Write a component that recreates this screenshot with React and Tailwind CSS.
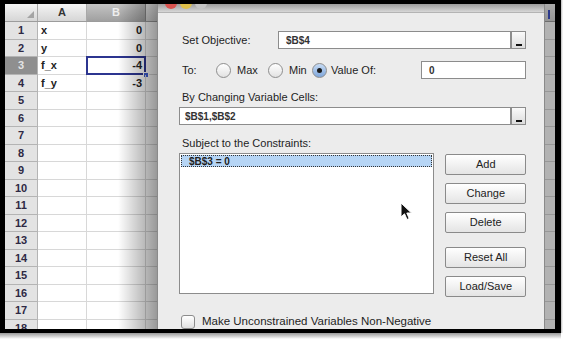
const cells = { 1: ["x", "0"], 2: ["y", "0"], 3: ["f_x", "-4"], 4: ["f_y", "-3"] };
const rowNums = Array.from({ length: 18 }, (_, i) => i + 1);

const Sheet = () => {
  return (
    <div className="flex flex-col w-full h-full bg-white font-['Liberation_Sans',Arial,sans-serif]">
      <div className="flex h-[18px] shrink-0 border-b border-[#9c9c9c] bg-gradient-to-b from-[#f4f4f4] to-[#d6d6d6]">
        <div className="relative w-[33px] border-r border-[#a8a8a8]">
          <div className="absolute right-[3px] bottom-[3px] w-0 h-0 border-l-[7px] border-l-transparent border-b-[7px] border-b-[#a4a4a4]" />
        </div>
        <div className="w-[49px] border-r border-[#a8a8a8] flex items-center justify-center text-[11px] font-bold text-[#333]">A</div>
        <div className="w-[59px] border-r border-[#8a8a8a] flex items-center justify-center text-[11px] font-bold text-[#eeeeee] bg-gradient-to-b from-[#c4c4c4] to-[#a0a0a0]">B</div>
        <div className="flex-1" />
      </div>
      {rowNums.map((n) => {
        const [a, b] = cells[n] || ["", ""];
        const sel = n === 3;
        return (
          <div key={n} className="flex h-[17.5px] shrink-0">
            <div className={`w-[33px] flex items-center justify-center border-r border-b border-[#b4b4b4] text-[11px] font-bold ${sel ? "bg-[#8f8f8f] text-[#e4e4e4]" : "bg-[#e3e3e3] text-[#2e2944]"}`}>
              {n}
            </div>
            <div className="w-[49px] flex items-center pl-[3px] border-r border-b border-[#d8d8d8] text-[11px] font-bold text-[#222]">{a}</div>
            <div className="relative w-[59px] flex items-center justify-end pr-[3px] border-r border-b border-[#d8d8d8] text-[11px] font-bold text-[#222]">
              {b}
              {sel && (
                <>
                  <div className="absolute inset-[-1px] border-2 border-[#2c3590]" />
                  <div className="absolute right-[-4px] bottom-[-4px] w-[6px] h-[6px] bg-[#3d5fd8] border border-white" />
                </>
              )}
            </div>
            <div className="flex-1 border-b border-[#d8d8d8]" />
          </div>
        );
      })}
    </div>
  );
};

const RangeButton = () => (
  <div className="relative w-[15px] h-[18px] border border-[#8c8c8c] bg-gradient-to-b from-[#fafafa] to-[#dcdcdc]">
    <div className="absolute left-[4px] bottom-[2px] w-[6px] h-[2px] bg-[#111]" />
  </div>
);

const Radio = ({ checked }) => (
  <div className={`w-[15px] h-[15px] rounded-full border border-[#8e8e8e] flex items-center justify-center ${checked ? "bg-gradient-to-b from-[#c7dcf5] to-[#7fa6da]" : "bg-gradient-to-b from-white to-[#e2e2e2]"}`}>
    {checked && <div className="w-[5px] h-[5px] rounded-full bg-[#1a1a1a]" />}
  </div>
);

const Btn = ({ label, className }) => (
  <div className={`h-[21px] flex items-center justify-center border border-[#8a8a8a] rounded-[2px] bg-gradient-to-b from-white to-[#e4e4e4] text-[11px] text-[#222] ${className || ""}`}>
    {label}
  </div>
);

const Dialog = () => {
  return (
    <div className="absolute left-[152px] top-0 w-[388px] h-[340px] flex flex-col border-l border-r border-[#8a8a8a] bg-[#ececec] font-['Liberation_Sans',Arial,sans-serif] text-[11px] text-[#1e1e1e]">
      <div className="relative h-[9px] shrink-0 bg-gradient-to-b from-[#9c9c9c] to-[#d8d8d8] border-b border-[#b4b4b4]">
        <div className="absolute left-[7px] top-[-7px] w-[12px] h-[12px] rounded-full bg-[#d9534f]" />
        <div className="absolute left-[22px] top-[-7px] w-[12px] h-[12px] rounded-full bg-[#e0c04a]" />
        <div className="absolute left-[37px] top-[-7px] w-[12px] h-[12px] rounded-full bg-[#c4c4c4]" />
        <div className="absolute inset-x-0 top-[-11px] text-center text-[12px] leading-[14px] text-[#666]">Solver Parameters</div>
      </div>
      <div className="flex flex-col pl-[21px] pr-[18px] pt-[18px]">
        <div className="flex items-center h-[18px]">
          <div className="w-[99px] pl-[3px]">Set Objective:</div>
          <div className="flex-1 h-[18px] flex items-center pl-[7px] bg-white border border-[#8c8c8c] text-[10px] font-bold text-[#333]">$B$4</div>
          <RangeButton />
        </div>
        <div className="flex items-center h-[18px] mt-[12px]">
          <div className="w-[37px] pl-[3px]">To:</div>
          <Radio />
          <div className="w-[37px] pl-[6px]">Max</div>
          <Radio />
          <div className="w-[29px] pl-[6px]">Min</div>
          <Radio checked />
          <div className="flex-1 pl-[4px]">Value Of:</div>
          <div className="w-[105px] h-[18px] flex items-center pl-[7px] bg-white border border-[#8c8c8c] text-[10px] font-bold text-[#333]">0</div>
        </div>
        <div className="h-[14px] mt-[11px] pl-[3px] flex items-center">By Changing Variable Cells:</div>
        <div className="flex items-center h-[18px] mt-[3px]">
          <div className="flex-1 h-[18px] flex items-center pl-[5px] bg-white border border-[#8c8c8c] text-[10px] font-bold text-[#333]">$B$1,$B$2</div>
          <RangeButton />
        </div>
        <div className="h-[14px] mt-[11px] pl-[3px] flex items-center">Subject to the Constraints:</div>
        <div className="flex mt-[3px]">
          <div className="w-[257px] h-[141px] bg-white border border-[#8c8c8c] p-px">
            <div className="h-[12px] flex items-center pl-[7px] bg-[#b6d5f5] border border-dotted border-[#333] text-[10px] font-bold text-[#222]">$B$3 = 0</div>
          </div>
          <div className="flex flex-col w-[81px] ml-[11px] pt-px">
            <Btn label="Add" />
            <Btn label="Change" className="mt-[8px]" />
            <Btn label="Delete" className="mt-[8px]" />
            <Btn label="Reset All" className="mt-[14px]" />
            <Btn label="Load/Save" className="mt-[8px]" />
          </div>
        </div>
        <div className="flex items-center mt-[16px] pl-[2px]">
          <div className="w-[14px] h-[14px] rounded-[3px] border border-[#8c8c8c] bg-gradient-to-b from-white to-[#e0e0e0]" />
          <div className="ml-[7px] text-[11.5px]">Make Unconstrained Variables Non-Negative</div>
        </div>
      </div>
    </div>
  );
};

const App = () => {
  return (
    <div className="relative w-[563px] h-[339px] bg-white overflow-hidden">
      <div className="relative w-[561px] h-[333px] border-black border-l-[5px] border-t-[4px] border-r-[6px] border-b-[4px] overflow-hidden">
        <Sheet />
        <div className="absolute left-[113px] top-0 w-[39px] h-full bg-gradient-to-r from-transparent to-black/40 pointer-events-none" />
        <div className="absolute left-[540px] top-0 w-[10px] h-full bg-black/30 pointer-events-none" />
        <div className="absolute left-[543px] top-[6px] w-[2px] h-[9px] bg-[#2c3a8c]" />
        <Dialog />
        <svg className="absolute left-[395px] top-[198px]" width="13" height="19" viewBox="0 0 13 19">
          <path d="M1 1 L1 15 L4.5 11.8 L7 17.5 L9.2 16.5 L6.8 11 L11.5 11 Z" fill="#111" stroke="#fff" strokeWidth="1" />
        </svg>
      </div>
      <div className="absolute left-0 top-[333px] w-[561px] h-[6px] bg-gradient-to-b from-[#9a9a9a] to-white" />
      <div className="absolute left-[561px] top-0 w-[2px] h-[333px] bg-gradient-to-r from-[#bbbbbb] to-white" />
    </div>
  );
};

export default App;
